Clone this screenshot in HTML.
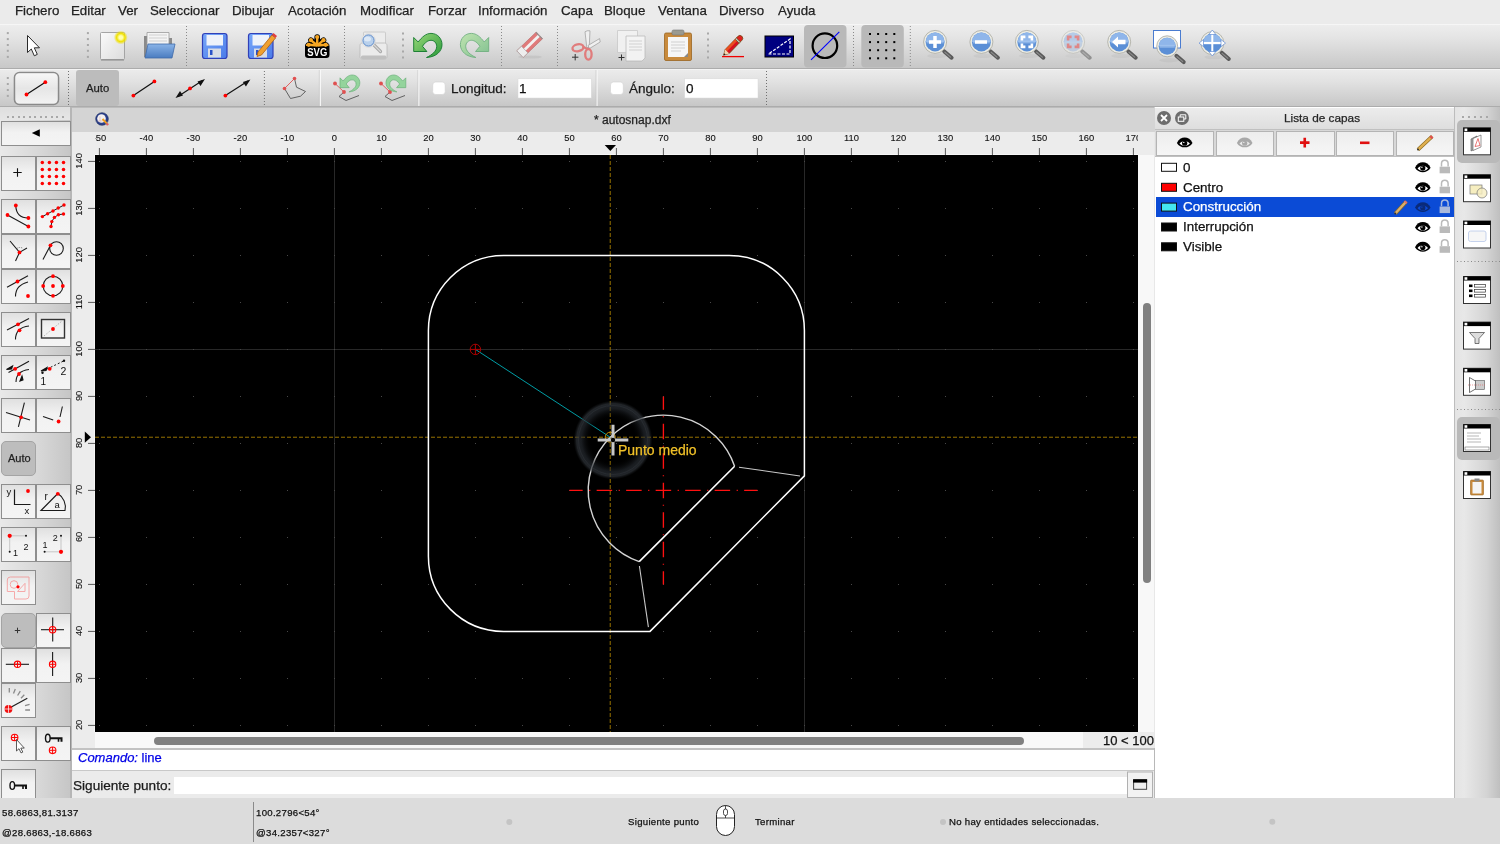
<!DOCTYPE html><html><head><meta charset="utf-8"><style>
*{margin:0;padding:0;box-sizing:border-box}
html,body{width:1500px;height:844px;overflow:hidden;background:#e8e8e8;font-family:"Liberation Sans",sans-serif;color:#1c1c1c}
.a{position:absolute}
.t{position:absolute;white-space:nowrap;line-height:1;will-change:transform;-webkit-text-stroke:0.25px currentColor}
svg{position:absolute;overflow:visible;will-change:transform}
</style></head><body>
<div class="a" style="left:0;top:0;width:1500px;height:24px;background:#ebebeb"></div>
<div class="t" style="left:14.6px;top:4px;font-size:13.3px;color:#222">Fichero</div>
<div class="t" style="left:71.4px;top:4px;font-size:13.3px;color:#222">Editar</div>
<div class="t" style="left:118.2px;top:4px;font-size:13.3px;color:#222">Ver</div>
<div class="t" style="left:150.4px;top:4px;font-size:13.3px;color:#222">Seleccionar</div>
<div class="t" style="left:232.4px;top:4px;font-size:13.3px;color:#222">Dibujar</div>
<div class="t" style="left:287.6px;top:4px;font-size:13.3px;color:#222">Acotación</div>
<div class="t" style="left:359.6px;top:4px;font-size:13.3px;color:#222">Modificar</div>
<div class="t" style="left:428px;top:4px;font-size:13.3px;color:#222">Forzar</div>
<div class="t" style="left:478px;top:4px;font-size:13.3px;color:#222">Información</div>
<div class="t" style="left:561px;top:4px;font-size:13.3px;color:#222">Capa</div>
<div class="t" style="left:604px;top:4px;font-size:13.3px;color:#222">Bloque</div>
<div class="t" style="left:658px;top:4px;font-size:13.3px;color:#222">Ventana</div>
<div class="t" style="left:719px;top:4px;font-size:13.3px;color:#222">Diverso</div>
<div class="t" style="left:778px;top:4px;font-size:13.3px;color:#222">Ayuda</div>
<div class="a" style="left:0;top:24px;width:1500px;height:1px;background:#f6f6f6"></div>
<div class="a" style="left:0;top:25px;width:1500px;height:43px;background:linear-gradient(#ededed,#e4e4e4 30%,#c8c8c8)"></div>
<div class="a" style="left:0;top:68px;width:1500px;height:1px;background:#acacac"></div>
<div class="a" style="left:0;top:69px;width:1500px;height:1px;background:#f4f4f4"></div>
<div class="a" style="left:0;top:70px;width:1500px;height:37px;background:linear-gradient(#ebebeb,#e2e2e2 30%,#c6c6c6)"></div>
<div class="a" style="left:0;top:106px;width:1500px;height:1px;background:#acacac"></div>
<svg class="a" style="left:0;top:0" width="1500" height="110" viewBox="0 0 1500 110"><rect x="6.8" y="32.1" width="2" height="2" fill="#a8a8a8"/><rect x="6.8" y="38.1" width="2" height="2" fill="#a8a8a8"/><rect x="6.8" y="44" width="2" height="2" fill="#a8a8a8"/><rect x="6.8" y="49.8" width="2" height="2" fill="#a8a8a8"/><rect x="6.8" y="55.9" width="2" height="2" fill="#a8a8a8"/><rect x="86.9" y="32.1" width="2" height="2" fill="#a8a8a8"/><rect x="86.9" y="38.1" width="2" height="2" fill="#a8a8a8"/><rect x="86.9" y="44" width="2" height="2" fill="#a8a8a8"/><rect x="86.9" y="49.8" width="2" height="2" fill="#a8a8a8"/><rect x="86.9" y="55.9" width="2" height="2" fill="#a8a8a8"/><rect x="6.8" y="77" width="2" height="2" fill="#a8a8a8"/><rect x="6.8" y="83" width="2" height="2" fill="#a8a8a8"/><rect x="6.8" y="89" width="2" height="2" fill="#a8a8a8"/><rect x="6.8" y="94.9" width="2" height="2" fill="#a8a8a8"/><path d="M27.5 35.5V52.5L31.3 49L34.3 55.8L37.3 54.4L34.3 47.8H39.5Z" fill="#fff" stroke="#2a2a2a" stroke-width="1" stroke-linejoin="round"/><defs><linearGradient id="pg" x1="0" y1="0" x2="1" y2="1"><stop offset="0" stop-color="#fafafa"/><stop offset="1" stop-color="#dcdcdc"/></linearGradient><radialGradient id="yg"><stop offset="0.25" stop-color="#ffffb0"/><stop offset="0.6" stop-color="#f0e000"/><stop offset="1" stop-color="#f0e000" stop-opacity="0"/></radialGradient><linearGradient id="bl" x1="0" y1="0" x2="1" y2="1"><stop offset="0" stop-color="#78a8fa"/><stop offset="1" stop-color="#4a7ae8"/></linearGradient><linearGradient id="fld" x1="0" y1="0" x2="0" y2="1"><stop offset="0" stop-color="#8ab4e8"/><stop offset="1" stop-color="#4a7cc0"/></linearGradient></defs><rect x="100.5" y="32.5" width="24" height="27" rx="1" fill="url(#pg)" stroke="#a4a4a4"/><line x1="101" y1="60" x2="124" y2="60" stroke="#888" stroke-width="1"/><circle cx="120.8" cy="37.5" r="7" fill="url(#yg)"/><path d="M144 36h9l2 2h17v19h-28z" fill="#8a8a8a"/><path d="M147 32.5h22v18h-22z" fill="#f4f4f4" stroke="#9a9a9a" stroke-width="0.8"/><path d="M149 35h18M149 38h18M149 41h18" stroke="#c8c8c8" stroke-width="0.8"/><path d="M148 44h27l-3 14h-27z" fill="url(#fld)" stroke="#3f6aa8" stroke-width="0.8"/><line x1="186.5" y1="26" x2="186.5" y2="67" stroke="#8a8a8a" stroke-width="1" stroke-dasharray="1 2"/><rect x="202.5" y="33.5" width="24.5" height="25" rx="2.5" fill="url(#bl)" stroke="#3040b8" stroke-width="1.2"/><rect x="206.5" y="35" width="16.5" height="10.5" fill="#eef2fa"/><rect x="208" y="48.5" width="13" height="9" fill="#d8dce6"/><rect x="210" y="50" width="2.5" height="5" fill="#2a52c8"/><rect x="248.5" y="33.5" width="24.5" height="25" rx="2.5" fill="url(#bl)" stroke="#3040b8" stroke-width="1.2"/><rect x="252.5" y="35" width="16.5" height="10.5" fill="#eef2fa"/><rect x="254" y="48.5" width="13" height="9" fill="#d8dce6"/><rect x="256" y="50" width="2.5" height="5" fill="#2a52c8"/><path d="M258 52L272 35l3.5 3L261.5 55L257 56.5Z" fill="#f0a030" stroke="#b06010" stroke-width="0.8"/><path d="M272 35l3.5 3 1.5-2-3.5-3z" fill="#e04040"/><line x1="288.5" y1="26" x2="288.5" y2="67" stroke="#8a8a8a" stroke-width="1" stroke-dasharray="1 2"/><rect x="305" y="43" width="24.5" height="15" rx="3.2" fill="#000"/><line x1="317.2" y1="45.5" x2="317.2" y2="37.0" stroke="#000" stroke-width="5.6" stroke-linecap="round"/><line x1="317.2" y1="45.5" x2="310.9" y2="40.2" stroke="#000" stroke-width="5.6" stroke-linecap="round"/><line x1="317.2" y1="45.5" x2="323.5" y2="40.2" stroke="#000" stroke-width="5.6" stroke-linecap="round"/><line x1="317.2" y1="45.5" x2="308.7" y2="44.8" stroke="#000" stroke-width="5.6" stroke-linecap="round"/><line x1="317.2" y1="45.5" x2="325.7" y2="44.8" stroke="#000" stroke-width="5.6" stroke-linecap="round"/><line x1="317.2" y1="45.5" x2="317.2" y2="37.0" stroke="#f5a623" stroke-width="2.4"/><circle cx="317.2" cy="37.0" r="2.1" fill="#f5a623"/><line x1="317.2" y1="45.5" x2="310.9" y2="40.2" stroke="#f5a623" stroke-width="2.4"/><circle cx="310.9" cy="40.2" r="2.1" fill="#f5a623"/><line x1="317.2" y1="45.5" x2="323.5" y2="40.2" stroke="#f5a623" stroke-width="2.4"/><circle cx="323.5" cy="40.2" r="2.1" fill="#f5a623"/><line x1="317.2" y1="45.5" x2="308.7" y2="44.8" stroke="#f5a623" stroke-width="2.4"/><circle cx="308.7" cy="44.8" r="2.1" fill="#f5a623"/><line x1="317.2" y1="45.5" x2="325.7" y2="44.8" stroke="#f5a623" stroke-width="2.4"/><circle cx="325.7" cy="44.8" r="2.1" fill="#f5a623"/><rect x="306" y="44.2" width="22.5" height="1.8" fill="#f5a623"/><text x="317.3" y="56.3" font-family="Liberation Sans" font-weight="bold" font-size="11" fill="#fff" text-anchor="middle" textLength="20" lengthAdjust="spacingAndGlyphs">SVG</text><line x1="344.5" y1="26" x2="344.5" y2="67" stroke="#8a8a8a" stroke-width="1" stroke-dasharray="1 2"/><rect x="363.5" y="32" width="22" height="15" rx="1" fill="#ececec" stroke="#c4c4c4" stroke-width="0.8"/><path d="M360 45.5c0-1.5 1-2.5 2.5-2.5h22c1.5 0 2.5 1 2.5 2.5v11c0 1.5-1 2.5-2.5 2.5h-22c-1.5 0-2.5-1-2.5-2.5z" fill="#ebebeb" stroke="#b8b8b8" stroke-width="0.8"/><rect x="361" y="55.5" width="25.5" height="3.5" rx="1.5" fill="#c0c0c0"/><line x1="374" y1="45" x2="380.5" y2="51.5" stroke="#a8a8a8" stroke-width="3.2" stroke-linecap="round"/><line x1="374" y1="45" x2="380.5" y2="51.5" stroke="#d8d8d8" stroke-width="1.2" stroke-linecap="round"/><circle cx="368.5" cy="40.5" r="6.8" fill="#f4f4f4" stroke="#d0d0d0" stroke-width="0.6"/><circle cx="368.5" cy="40.5" r="5.6" fill="#b8d0ec" stroke="#5a88c8" stroke-width="1"/><ellipse cx="367.5" cy="39" rx="3.5" ry="2.5" fill="#dce8f6"/><rect x="402" y="32.5" width="2" height="2" fill="#a8a8a8"/><rect x="402" y="38.5" width="2" height="2" fill="#a8a8a8"/><rect x="402" y="44.5" width="2" height="2" fill="#a8a8a8"/><rect x="402" y="50.5" width="2" height="2" fill="#a8a8a8"/><rect x="402" y="56.5" width="2" height="2" fill="#a8a8a8"/><defs><linearGradient id="ug" x1="0" y1="0" x2="1" y2="1"><stop offset="0" stop-color="#9ad87a"/><stop offset="1" stop-color="#2a9a3a"/></linearGradient><linearGradient id="rg" x1="1" y1="0" x2="0" y2="1"><stop offset="0" stop-color="#c0e4b0"/><stop offset="1" stop-color="#80c090"/></linearGradient></defs><path d="M413.7 37.5L418.2 42C422 37 426 33.4 431 33.4C437.5 33.4 442 38.5 442 44.6C442 51.5 436 57 426.5 57.5C432 55 436.7 51 436.7 46.5C436.7 42.8 434 40.3 431 40.3C428 40.3 425 42.5 422.5 46.3L426.9 51.5L413.7 51.5Z" fill="url(#ug)" stroke="#10782a" stroke-width="0.9" stroke-linejoin="round"/><path d="M413.7 37.5L418.2 42C422 37 426 33.4 431 33.4C437.5 33.4 442 38.5 442 44.6C442 51.5 436 57 426.5 57.5C432 55 436.7 51 436.7 46.5C436.7 42.8 434 40.3 431 40.3C428 40.3 425 42.5 422.5 46.3L426.9 51.5L413.7 51.5Z" transform="matrix(-1 0 0 1 902.4 0)" fill="url(#rg)" stroke="#70b080" stroke-width="0.9" stroke-linejoin="round"/><line x1="501.5" y1="26" x2="501.5" y2="67" stroke="#8a8a8a" stroke-width="1" stroke-dasharray="1 2"/><ellipse cx="530" cy="57" rx="12" ry="1.6" fill="#000" opacity="0.06"/><g transform="translate(520 54.1) rotate(-44)"><rect x="0" y="-4.6" width="27" height="9.2" fill="#e07a7a" stroke="#b87070" stroke-width="0.6"/><rect x="6" y="-1.4" width="21" height="2.8" fill="#f2f2f2"/><rect x="0" y="-4.6" width="6.5" height="9.2" fill="#eeeeee" stroke="#a0a0a0" stroke-width="0.6"/><rect x="26" y="-4.6" width="1.2" height="9.2" fill="#909090"/></g><line x1="557.5" y1="26" x2="557.5" y2="67" stroke="#8a8a8a" stroke-width="1" stroke-dasharray="1 2"/><path d="M585 31.8Q587 30.2 590 30.8L589.2 47.5L586.8 47.5Z" fill="#f0f0f0" stroke="#9a9a9a" stroke-width="0.7"/><path d="M588 45.5L599.6 38.6L600.2 42L589.5 48.5Z" fill="#f0f0f0" stroke="#9a9a9a" stroke-width="0.7"/><ellipse cx="578" cy="47.8" rx="5.6" ry="3.4" fill="none" stroke="#e07c7c" stroke-width="2.3" transform="rotate(-12 578 47.8)"/><path d="M582.5 46.5L587.5 49" stroke="#e07c7c" stroke-width="2.3"/><ellipse cx="588.4" cy="54.3" rx="3.2" ry="5.3" fill="none" stroke="#e07c7c" stroke-width="2.3"/><path d="M572 57.2h6.4M575.2 54v6.4" stroke="#333" stroke-width="1"/><g opacity="0.9"><path d="M617.5 30.5h20v22h-20z" fill="#f2f2f2" stroke="#c4c4c4" stroke-width="0.8"/><path d="M626 36h19v22l-3 3h-16z" fill="#f6f6f6" stroke="#b8b8b8" stroke-width="0.8"/><path d="M629 41h13M629 44h13M629 47h13M629 50h13" stroke="#c8c8c8" stroke-width="0.8"/></g><path d="M618.5 57.5h6M621.5 54.5v6" stroke="#333" stroke-width="1"/><rect x="664.5" y="33" width="27" height="27.5" rx="1.5" fill="#c88a3c" stroke="#9a6420" stroke-width="0.8"/><path d="M668 37h20v20h-16l-4-0z" fill="#f6f6f6"/><path d="M684 57l4-4v4z" fill="#888"/><path d="M671 42h14M671 45h14M671 48h14M671 51h10" stroke="#c8c8c8" stroke-width="0.8"/><rect x="672" y="30" width="12" height="5" rx="1.5" fill="#9a9a90" stroke="#777" stroke-width="0.6"/><rect x="707" y="32.5" width="2" height="2" fill="#a8a8a8"/><rect x="707" y="38.5" width="2" height="2" fill="#a8a8a8"/><rect x="707" y="44.5" width="2" height="2" fill="#a8a8a8"/><rect x="707" y="50.5" width="2" height="2" fill="#a8a8a8"/><rect x="707" y="56.5" width="2" height="2" fill="#a8a8a8"/><line x1="722" y1="56.6" x2="744" y2="56.6" stroke="#f00000" stroke-width="1.3"/><g transform="translate(723.6 55.2) rotate(-46)"><path d="M0 0L5.2 -2.8H19.6V2.8H5.2Z" fill="#d81020" stroke="#6a4a10" stroke-width="0.7"/><rect x="5.2" y="-2.8" width="14.4" height="2.6" fill="#e85020"/><path d="M0.3 0L5.2 -2.8V2.8Z" fill="#f2d8b0"/><path d="M0 0L1.8 -1V1Z" fill="#111"/><rect x="19.6" y="-2.8" width="1.8" height="5.6" fill="#d0d0d0" stroke="#6a4a10" stroke-width="0.7"/><path d="M21.4 -2.8H23.5A2.8 2.8 0 0 1 23.5 2.8H21.4Z" fill="#e02020" stroke="#6a4a10" stroke-width="0.7"/></g><rect x="765" y="36" width="28.5" height="21" fill="#000080" stroke="#000" stroke-width="1"/><path d="M768.5 54H790V39Z" fill="none" stroke="#fff" stroke-width="1.2" stroke-dasharray="3 1.5"/><rect x="804" y="25" width="42.5" height="42.5" rx="4" fill="#b9b9b9"/><circle cx="824.9" cy="45.7" r="12.3" fill="none" stroke="#000" stroke-width="2.2"/><line x1="811" y1="59.8" x2="839.3" y2="31.9" stroke="#0000ff" stroke-width="1.1"/><line x1="853.5" y1="26" x2="853.5" y2="67" stroke="#8a8a8a" stroke-width="1" stroke-dasharray="1 2"/><rect x="861.3" y="25" width="42.5" height="42.5" rx="4" fill="#b9b9b9"/><rect x="869.0" y="33.0" width="2" height="2" fill="#000"/><rect x="869.0" y="41.1" width="2" height="2" fill="#000"/><rect x="869.0" y="49.2" width="2" height="2" fill="#000"/><rect x="869.0" y="57.3" width="2" height="2" fill="#000"/><rect x="877.1" y="33.0" width="2" height="2" fill="#000"/><rect x="877.1" y="41.1" width="2" height="2" fill="#000"/><rect x="877.1" y="49.2" width="2" height="2" fill="#000"/><rect x="877.1" y="57.3" width="2" height="2" fill="#000"/><rect x="885.2" y="33.0" width="2" height="2" fill="#000"/><rect x="885.2" y="41.1" width="2" height="2" fill="#000"/><rect x="885.2" y="49.2" width="2" height="2" fill="#000"/><rect x="885.2" y="57.3" width="2" height="2" fill="#000"/><rect x="893.3" y="33.0" width="2" height="2" fill="#000"/><rect x="893.3" y="41.1" width="2" height="2" fill="#000"/><rect x="893.3" y="49.2" width="2" height="2" fill="#000"/><rect x="893.3" y="57.3" width="2" height="2" fill="#000"/><line x1="910.3" y1="26" x2="910.3" y2="67" stroke="#8a8a8a" stroke-width="1" stroke-dasharray="1 2"/><g><ellipse cx="937.1" cy="55.9" rx="10" ry="2.2" fill="#000" opacity="0.04"/><line x1="944.3000000000001" y1="51.4" x2="951.6" y2="57.7" stroke="#5a5a5a" stroke-width="4" stroke-linecap="round"/><line x1="944.9" y1="52.2" x2="950.6" y2="57.099999999999994" stroke="#8a8a8a" stroke-width="1.2" stroke-linecap="round"/><circle cx="935.1" cy="41.9" r="11.5" fill="#ecece4" stroke="#a8a8a0" stroke-width="0.8"/><circle cx="935.1" cy="41.9" r="9.5" fill="#5b8fd6"/><path d="M925.6 41.9A9.5 9.5 0 0 1 944.6 41.9Z" fill="#8fb6ea"/><rect x="926.6" y="40.4" width="17.0" height="3" fill="#a8c8f0" opacity="0.6"/><path d="M929 42h12M935 36v12" stroke="#fff" stroke-width="3.5"/></g><g><ellipse cx="983.4" cy="55.9" rx="10" ry="2.2" fill="#000" opacity="0.04"/><line x1="990.6" y1="51.4" x2="997.9" y2="57.7" stroke="#5a5a5a" stroke-width="4" stroke-linecap="round"/><line x1="991.1999999999999" y1="52.2" x2="996.9" y2="57.099999999999994" stroke="#8a8a8a" stroke-width="1.2" stroke-linecap="round"/><circle cx="981.4" cy="41.9" r="11.5" fill="#ecece4" stroke="#a8a8a0" stroke-width="0.8"/><circle cx="981.4" cy="41.9" r="9.5" fill="#5b8fd6"/><path d="M971.9 41.9A9.5 9.5 0 0 1 990.9 41.9Z" fill="#8fb6ea"/><rect x="972.9" y="40.4" width="17.0" height="3" fill="#a8c8f0" opacity="0.6"/><path d="M975 42h12" stroke="#fff" stroke-width="3.5"/></g><g><ellipse cx="1028.9" cy="55.9" rx="10" ry="2.2" fill="#000" opacity="0.04"/><line x1="1036.1000000000001" y1="51.4" x2="1043.4" y2="57.7" stroke="#5a5a5a" stroke-width="4" stroke-linecap="round"/><line x1="1036.7" y1="52.2" x2="1042.4" y2="57.099999999999994" stroke="#8a8a8a" stroke-width="1.2" stroke-linecap="round"/><circle cx="1026.9" cy="41.9" r="11.5" fill="#ecece4" stroke="#a8a8a0" stroke-width="0.8"/><circle cx="1026.9" cy="41.9" r="9.5" fill="#5b8fd6"/><path d="M1017.4000000000001 41.9A9.5 9.5 0 0 1 1036.4 41.9Z" fill="#8fb6ea"/><rect x="1018.4000000000001" y="40.4" width="17.0" height="3" fill="#a8c8f0" opacity="0.6"/><path d="M1021.9000000000001 40.4v-3.5h3.5M1028.4 36.9h3.5v3.5M1031.9 43.4v3.5h-3.5M1025.4 46.9h-3.5v-3.5" fill="none" stroke="#fff" stroke-width="2.6"/></g><g opacity="0.55"><ellipse cx="1075.1" cy="55.9" rx="10" ry="2.2" fill="#000" opacity="0.04"/><line x1="1082.3" y1="51.4" x2="1089.6" y2="57.7" stroke="#5a5a5a" stroke-width="4" stroke-linecap="round"/><line x1="1082.8999999999999" y1="52.2" x2="1088.6" y2="57.099999999999994" stroke="#8a8a8a" stroke-width="1.2" stroke-linecap="round"/><circle cx="1073.1" cy="41.9" r="11.5" fill="#ecece4" stroke="#a8a8a0" stroke-width="0.8"/><circle cx="1073.1" cy="41.9" r="9.5" fill="#a8c0e0"/><path d="M1063.6 41.9A9.5 9.5 0 0 1 1082.6 41.9Z" fill="#8fb6ea"/><rect x="1064.6" y="40.4" width="17.0" height="3" fill="#a8c8f0" opacity="0.6"/><path d="M1068.1 40.4v-3.5h3.5M1074.6 36.9h3.5v3.5M1078.1 43.4v3.5h-3.5M1071.6 46.9h-3.5v-3.5" fill="none" stroke="#e04040" stroke-width="2.6"/></g><g><ellipse cx="1121.2" cy="55.9" rx="10" ry="2.2" fill="#000" opacity="0.04"/><line x1="1128.4" y1="51.4" x2="1135.7" y2="57.7" stroke="#5a5a5a" stroke-width="4" stroke-linecap="round"/><line x1="1129.0" y1="52.2" x2="1134.7" y2="57.099999999999994" stroke="#8a8a8a" stroke-width="1.2" stroke-linecap="round"/><circle cx="1119.2" cy="41.9" r="11.5" fill="#ecece4" stroke="#a8a8a0" stroke-width="0.8"/><circle cx="1119.2" cy="41.9" r="9.5" fill="#5b8fd6"/><path d="M1109.7 41.9A9.5 9.5 0 0 1 1128.7 41.9Z" fill="#8fb6ea"/><rect x="1110.7" y="40.4" width="17.0" height="3" fill="#a8c8f0" opacity="0.6"/><path d="M1112 42l6-5.5v3.3h7.5v4.4h-7.5v3.3z" fill="#fff"/></g><rect x="1153.5" y="30.5" width="27" height="17.5" fill="#fff" stroke="#4a7cd0" stroke-width="1"/><g><ellipse cx="1169.2" cy="60.3" rx="10" ry="2.2" fill="#000" opacity="0.04"/><line x1="1176.4" y1="55.8" x2="1183.7" y2="62.099999999999994" stroke="#5a5a5a" stroke-width="4" stroke-linecap="round"/><line x1="1177.0" y1="56.599999999999994" x2="1182.7" y2="61.5" stroke="#8a8a8a" stroke-width="1.2" stroke-linecap="round"/><circle cx="1167.2" cy="46.3" r="10.5" fill="#ecece4" stroke="#a8a8a0" stroke-width="0.8"/><circle cx="1167.2" cy="46.3" r="8.5" fill="#5b8fd6"/><path d="M1158.7 46.3A8.5 8.5 0 0 1 1175.7 46.3Z" fill="#8fb6ea"/><rect x="1159.7" y="44.8" width="15.0" height="3" fill="#a8c8f0" opacity="0.6"/></g><g><ellipse cx="1214.3" cy="57.1" rx="10" ry="2.2" fill="#000" opacity="0.04"/><line x1="1221.5" y1="52.6" x2="1228.8" y2="58.900000000000006" stroke="#5a5a5a" stroke-width="4" stroke-linecap="round"/><line x1="1222.1" y1="53.400000000000006" x2="1227.8" y2="58.3" stroke="#8a8a8a" stroke-width="1.2" stroke-linecap="round"/><circle cx="1212.3" cy="43.1" r="11.5" fill="#ecece4" stroke="#a8a8a0" stroke-width="0.8"/><circle cx="1212.3" cy="43.1" r="9.5" fill="#5b8fd6"/><path d="M1202.8 43.1A9.5 9.5 0 0 1 1221.8 43.1Z" fill="#8fb6ea"/><rect x="1203.8" y="41.6" width="17.0" height="3" fill="#a8c8f0" opacity="0.6"/><path d="M1212.3 33v20M1202 43.1h20" stroke="#fff" stroke-width="2"/><path d="M1212.3 30l-3.5 4.5h7zM1212.3 56l-3.5-4.5h7zM1199 43.1l4.5-3.5v7zM1225.5 43.1l-4.5-3.5v7z" fill="#fff" stroke="#4a7cd0" stroke-width="0.6"/></g><rect x="14.5" y="72.5" width="44" height="32" rx="5" fill="none" stroke="#8a8a8a" stroke-width="1.6"/><defs><linearGradient id="bt" x1="0" y1="0" x2="0" y2="1"><stop offset="0" stop-color="#f6f6f6"/><stop offset="0.5" stop-color="#e6e6e6"/><stop offset="1" stop-color="#f2f2f2"/></linearGradient></defs><rect x="15.5" y="73.5" width="42" height="30" rx="4" fill="url(#bt)"/><line x1="26.5" y1="94.5" x2="45.3" y2="82.2" stroke="#111" stroke-width="1.2"/><circle cx="26.5" cy="94.5" r="1.9" fill="#f00"/><circle cx="45.3" cy="82.2" r="1.9" fill="#f00"/><line x1="68.5" y1="71" x2="68.5" y2="106" stroke="#707070" stroke-width="1" stroke-dasharray="1 2"/><rect x="76" y="70" width="43" height="36" rx="3" fill="#bcbcbc"/><line x1="133.4" y1="95.6" x2="154.4" y2="81.4" stroke="#111" stroke-width="1.2"/><circle cx="133.4" cy="95.6" r="1.9" fill="#f00"/><circle cx="154.4" cy="81.4" r="1.9" fill="#f00"/><line x1="178" y1="96.4" x2="202.5" y2="80.6" stroke="#111" stroke-width="1.2"/><path d="M175.5 98l4.5-7 3 4.5z M205 79l-4.5 7-3-4.5z" fill="#111"/><circle cx="190" cy="88.4" r="1.9" fill="#f00"/><line x1="225.4" y1="95.6" x2="248" y2="81" stroke="#111" stroke-width="1.2"/><path d="M250.4 79.4l-4.5 7-3-4.5z" fill="#111"/><circle cx="225.4" cy="95.6" r="1.9" fill="#f00"/><line x1="264.4" y1="71" x2="264.4" y2="106" stroke="#707070" stroke-width="1" stroke-dasharray="1 2"/><path d="M284.5 88.5L290.5 98.5L300.5 96.2L305.5 91.5L296.5 87.2L294.5 78.5" fill="none" stroke="#555" stroke-width="0.9"/><line x1="294.5" y1="78.5" x2="284.5" y2="88.5" stroke="#e06060" stroke-width="1"/><circle cx="294.5" cy="78.5" r="1.8" fill="#e05050"/><circle cx="284.5" cy="88.5" r="1.8" fill="#e05050"/><line x1="320.3" y1="70" x2="320.3" y2="106" stroke="#fafafa" stroke-width="1.2"/><line x1="319.3" y1="70" x2="319.3" y2="106" stroke="#c4c4c4" stroke-width="0.6"/><path d="M344 92L339 96.5L346 100.5L359 95.5" fill="none" stroke="#555" stroke-width="0.9"/><line x1="335" y1="83.5" x2="344" y2="92" stroke="#e06060" stroke-width="1"/><circle cx="335" cy="83.5" r="1.9" fill="#e05050"/><circle cx="344" cy="92" r="1.9" fill="#e05050"/><path d="M413.7 37.5L418.2 42C422 37 426 33.4 431 33.4C437.5 33.4 442 38.5 442 44.6C442 51.5 436 57 426.5 57.5C432 55 436.7 51 436.7 46.5C436.7 42.8 434 40.3 431 40.3C428 40.3 425 42.5 422.5 46.3L426.9 51.5L413.7 51.5Z" transform="matrix(0.7 0 0 0.7 50.41 51.62)" fill="#94d49c" stroke="#6ab07a" stroke-width="1"/><path d="M390 92L385 96.5L392 100.5L405 95.5" fill="none" stroke="#555" stroke-width="0.9"/><line x1="381" y1="83.5" x2="390" y2="92" stroke="#e06060" stroke-width="1"/><circle cx="381" cy="83.5" r="1.9" fill="#e05050"/><circle cx="390" cy="92" r="1.9" fill="#e05050"/><path d="M413.7 37.5L418.2 42C422 37 426 33.4 431 33.4C437.5 33.4 442 38.5 442 44.6C442 51.5 436 57 426.5 57.5C432 55 436.7 51 436.7 46.5C436.7 42.8 434 40.3 431 40.3C428 40.3 425 42.5 422.5 46.3L426.9 51.5L413.7 51.5Z" transform="matrix(-0.7 0 0 0.7 695.4 51.62)" fill="#94d49c" stroke="#6ab07a" stroke-width="1"/><line x1="418.8" y1="70" x2="418.8" y2="106" stroke="#fafafa" stroke-width="1.2"/><line x1="417.8" y1="70" x2="417.8" y2="106" stroke="#c4c4c4" stroke-width="0.6"/><line x1="597" y1="70" x2="597" y2="106" stroke="#fafafa" stroke-width="1.2"/><line x1="596" y1="70" x2="596" y2="106" stroke="#c4c4c4" stroke-width="0.6"/><rect x="432.7" y="82" width="12.5" height="12.5" rx="3" fill="#fff" stroke="#d0d0d0" stroke-width="0.6"/><rect x="610.5" y="82" width="12.8" height="12.5" rx="3" fill="#fff" stroke="#d0d0d0" stroke-width="0.6"/><rect x="518" y="78.8" width="73.3" height="19.2" fill="#fff" stroke="#d8d8d8" stroke-width="0.5"/><rect x="684.7" y="78.8" width="73.3" height="19.2" fill="#fff" stroke="#d8d8d8" stroke-width="0.5"/><line x1="766.5" y1="71" x2="766.5" y2="106" stroke="#707070" stroke-width="1" stroke-dasharray="1 2"/></svg>
<div class="t" style="left:86.3px;top:82.9px;font-size:11.3px;color:#222">Auto</div>
<div class="t" style="left:451.3px;top:81.5px;font-size:13.5px;color:#1a1a1a">Longitud:</div>
<div class="t" style="left:629.2px;top:81.5px;font-size:13.5px;color:#1a1a1a">Ángulo:</div>
<div class="t" style="left:519px;top:82px;font-size:13.5px;color:#111">1</div>
<div class="t" style="left:686px;top:82px;font-size:13.5px;color:#111">0</div>
<div class="a" style="left:0;top:107px;width:70px;height:691px;background:linear-gradient(90deg,#e9e9e9,#d6d6d6 60%,#c6c6c6)"></div><div class="a" style="left:70px;top:107px;width:2px;height:691px;background:#b6b6b6"></div><div class="a" style="left:0;top:107px;width:70px;height:13px;background:linear-gradient(#dedede,#e6e6e6)"></div><div class="a" style="left:6.6px;top:116px;width:2px;height:2px;background:#a8a8a8"></div><div class="a" style="left:12.1px;top:116px;width:2px;height:2px;background:#a8a8a8"></div><div class="a" style="left:17.6px;top:116px;width:2px;height:2px;background:#a8a8a8"></div><div class="a" style="left:23.1px;top:116px;width:2px;height:2px;background:#a8a8a8"></div><div class="a" style="left:28.6px;top:116px;width:2px;height:2px;background:#a8a8a8"></div><div class="a" style="left:34.1px;top:116px;width:2px;height:2px;background:#a8a8a8"></div><div class="a" style="left:39.6px;top:116px;width:2px;height:2px;background:#a8a8a8"></div><div class="a" style="left:45.1px;top:116px;width:2px;height:2px;background:#a8a8a8"></div><div class="a" style="left:50.6px;top:116px;width:2px;height:2px;background:#a8a8a8"></div><div class="a" style="left:56.1px;top:116px;width:2px;height:2px;background:#a8a8a8"></div><div class="a" style="left:61.6px;top:116px;width:2px;height:2px;background:#a8a8a8"></div><div class="a" style="left:1px;top:120.5px;width:70px;height:25px;background:linear-gradient(#e0e0e0,#f2f2f2 45%,#f4f4f4);border:1px solid #8e8e8e"></div><div class="a" style="left:1px;top:156px;width:35px;height:35px;background:linear-gradient(#e0e0e0,#f2f2f2 45%,#f4f4f4);border:1px solid #8e8e8e"></div><div class="a" style="left:36px;top:156px;width:35px;height:35px;background:linear-gradient(#e0e0e0,#f2f2f2 45%,#f4f4f4);border:1px solid #8e8e8e"></div><div class="a" style="left:1px;top:199px;width:35px;height:35px;background:linear-gradient(#e0e0e0,#f2f2f2 45%,#f4f4f4);border:1px solid #8e8e8e"></div><div class="a" style="left:36px;top:199px;width:35px;height:35px;background:linear-gradient(#e0e0e0,#f2f2f2 45%,#f4f4f4);border:1px solid #8e8e8e"></div><div class="a" style="left:1px;top:234px;width:35px;height:35px;background:linear-gradient(#e0e0e0,#f2f2f2 45%,#f4f4f4);border:1px solid #8e8e8e"></div><div class="a" style="left:36px;top:234px;width:35px;height:35px;background:linear-gradient(#e0e0e0,#f2f2f2 45%,#f4f4f4);border:1px solid #8e8e8e"></div><div class="a" style="left:1px;top:269px;width:35px;height:35px;background:linear-gradient(#e0e0e0,#f2f2f2 45%,#f4f4f4);border:1px solid #8e8e8e"></div><div class="a" style="left:36px;top:269px;width:35px;height:35px;background:linear-gradient(#e0e0e0,#f2f2f2 45%,#f4f4f4);border:1px solid #8e8e8e"></div><div class="a" style="left:1px;top:312px;width:35px;height:35px;background:linear-gradient(#e0e0e0,#f2f2f2 45%,#f4f4f4);border:1px solid #8e8e8e"></div><div class="a" style="left:36px;top:312px;width:35px;height:35px;background:linear-gradient(#e0e0e0,#f2f2f2 45%,#f4f4f4);border:1px solid #8e8e8e"></div><div class="a" style="left:1px;top:355px;width:35px;height:35px;background:linear-gradient(#e0e0e0,#f2f2f2 45%,#f4f4f4);border:1px solid #8e8e8e"></div><div class="a" style="left:36px;top:355px;width:35px;height:35px;background:linear-gradient(#e0e0e0,#f2f2f2 45%,#f4f4f4);border:1px solid #8e8e8e"></div><div class="a" style="left:1px;top:398px;width:35px;height:35px;background:linear-gradient(#e0e0e0,#f2f2f2 45%,#f4f4f4);border:1px solid #8e8e8e"></div><div class="a" style="left:36px;top:398px;width:35px;height:35px;background:linear-gradient(#e0e0e0,#f2f2f2 45%,#f4f4f4);border:1px solid #8e8e8e"></div><div class="a" style="left:1px;top:441px;width:35px;height:35px;background:#bdbdbd;border:1px solid #a4a4a4;border-radius:5px"></div><div class="a" style="left:1px;top:484px;width:35px;height:35px;background:linear-gradient(#e0e0e0,#f2f2f2 45%,#f4f4f4);border:1px solid #8e8e8e"></div><div class="a" style="left:36px;top:484px;width:35px;height:35px;background:linear-gradient(#e0e0e0,#f2f2f2 45%,#f4f4f4);border:1px solid #8e8e8e"></div><div class="a" style="left:1px;top:527px;width:35px;height:35px;background:linear-gradient(#e0e0e0,#f2f2f2 45%,#f4f4f4);border:1px solid #8e8e8e"></div><div class="a" style="left:36px;top:527px;width:35px;height:35px;background:linear-gradient(#e0e0e0,#f2f2f2 45%,#f4f4f4);border:1px solid #8e8e8e"></div><div class="a" style="left:1px;top:570px;width:35px;height:35px;background:linear-gradient(#e0e0e0,#f2f2f2 45%,#f4f4f4);border:1px solid #8e8e8e"></div><div class="a" style="left:1px;top:613px;width:35px;height:35px;background:#bdbdbd;border:1px solid #a4a4a4;border-radius:5px"></div><div class="a" style="left:36px;top:613px;width:35px;height:35px;background:linear-gradient(#e0e0e0,#f2f2f2 45%,#f4f4f4);border:1px solid #8e8e8e"></div><div class="a" style="left:1px;top:648px;width:35px;height:35px;background:linear-gradient(#e0e0e0,#f2f2f2 45%,#f4f4f4);border:1px solid #8e8e8e"></div><div class="a" style="left:36px;top:648px;width:35px;height:35px;background:linear-gradient(#e0e0e0,#f2f2f2 45%,#f4f4f4);border:1px solid #8e8e8e"></div><div class="a" style="left:1px;top:683px;width:35px;height:35px;background:linear-gradient(#e0e0e0,#f2f2f2 45%,#f4f4f4);border:1px solid #8e8e8e"></div><div class="a" style="left:1px;top:726px;width:35px;height:35px;background:linear-gradient(#e0e0e0,#f2f2f2 45%,#f4f4f4);border:1px solid #8e8e8e"></div><div class="a" style="left:36px;top:726px;width:35px;height:35px;background:linear-gradient(#e0e0e0,#f2f2f2 45%,#f4f4f4);border:1px solid #8e8e8e"></div><div class="a" style="left:1px;top:769px;width:35px;height:30px;background:linear-gradient(#e0e0e0,#f2f2f2 45%,#f4f4f4);border:1px solid #8e8e8e"></div><div class="t" style="left:7.5px;top:453px;font-size:11px;color:#222">Auto</div><svg class="a" style="left:0;top:0" width="72" height="844" viewBox="0 0 72 844"><path d="M31.8 133L39.8 129.3V136.8Z" fill="#000"/><path d="M13.3 172.5h8.4M17.5 168.3v8.4" stroke="#111" stroke-width="1.1"/><circle cx="42.3" cy="162.6" r="1.75" fill="#f00"/><circle cx="42.3" cy="169.53" r="1.75" fill="#f00"/><circle cx="42.3" cy="176.45999999999998" r="1.75" fill="#f00"/><circle cx="42.3" cy="183.39" r="1.75" fill="#f00"/><circle cx="49.37" cy="162.6" r="1.75" fill="#f00"/><circle cx="49.37" cy="169.53" r="1.75" fill="#f00"/><circle cx="49.37" cy="176.45999999999998" r="1.75" fill="#f00"/><circle cx="49.37" cy="183.39" r="1.75" fill="#f00"/><circle cx="56.44" cy="162.6" r="1.75" fill="#f00"/><circle cx="56.44" cy="169.53" r="1.75" fill="#f00"/><circle cx="56.44" cy="176.45999999999998" r="1.75" fill="#f00"/><circle cx="56.44" cy="183.39" r="1.75" fill="#f00"/><circle cx="63.51" cy="162.6" r="1.75" fill="#f00"/><circle cx="63.51" cy="169.53" r="1.75" fill="#f00"/><circle cx="63.51" cy="176.45999999999998" r="1.75" fill="#f00"/><circle cx="63.51" cy="183.39" r="1.75" fill="#f00"/><line x1="7.5" y1="215" x2="28.4" y2="226.5" stroke="#1a1a1a" stroke-width="1.1"/><path d="M15.8 205.5C16 214 21 218 28.4 218" fill="none" stroke="#1a1a1a" stroke-width="1.1"/><circle cx="7.5" cy="215" r="1.9" fill="#f00"/><circle cx="28.4" cy="226.5" r="1.9" fill="#f00"/><circle cx="15.8" cy="205.5" r="1.9" fill="#f00"/><circle cx="28.4" cy="218" r="1.9" fill="#f00"/><path d="M42.4 216.6L64 205M51 226.5L51.8 221.6 54.4 217.4 58.4 214.7 63.5 214" fill="none" stroke="#1a1a1a" stroke-width="1"/><circle cx="42.4" cy="216.6" r="1.7" fill="#f00"/><circle cx="47.6" cy="213.7" r="1.7" fill="#f00"/><circle cx="53" cy="211" r="1.7" fill="#f00"/><circle cx="58.2" cy="208" r="1.7" fill="#f00"/><circle cx="64" cy="205" r="1.7" fill="#f00"/><circle cx="51" cy="226.5" r="1.7" fill="#f00"/><circle cx="51.8" cy="221.6" r="1.7" fill="#f00"/><circle cx="54.4" cy="217.4" r="1.7" fill="#f00"/><circle cx="58.4" cy="214.7" r="1.7" fill="#f00"/><circle cx="63.5" cy="214" r="1.7" fill="#f00"/><path d="M10 241L19.5 252.4L27 248M19.5 252.4L15.5 261" fill="none" stroke="#1a1a1a" stroke-width="1.1"/><path d="M17 248.5a4 3 0 0 1 6 0" fill="none" stroke="#333" stroke-width="0.6" stroke-dasharray="1 1"/><circle cx="19.5" cy="252.4" r="1.9" fill="#f00"/><circle cx="56.5" cy="248.5" r="6.8" fill="none" stroke="#1a1a1a" stroke-width="1.1"/><line x1="43" y1="259.5" x2="50.5" y2="245.3" stroke="#1a1a1a" stroke-width="1.1"/><circle cx="50.5" cy="245.3" r="1.9" fill="#f00"/><line x1="7" y1="287.2" x2="28" y2="275.8" stroke="#1a1a1a" stroke-width="1.1"/><path d="M15.5 296.5C15.5 289 20 284 28 282" fill="none" stroke="#1a1a1a" stroke-width="1.1"/><circle cx="17.5" cy="281.5" r="1.9" fill="#f00"/><circle cx="28" cy="296" r="1.9" fill="#f00"/><circle cx="53" cy="286" r="9.8" fill="none" stroke="#1a1a1a" stroke-width="1.1"/><circle cx="53" cy="276.2" r="1.9" fill="#f00"/><circle cx="43.2" cy="286" r="1.9" fill="#f00"/><circle cx="62.8" cy="286" r="1.9" fill="#f00"/><circle cx="53" cy="295.8" r="1.9" fill="#f00"/><circle cx="53" cy="286" r="1.9" fill="#f00"/><line x1="7" y1="330" x2="29" y2="318.5" stroke="#1a1a1a" stroke-width="1.1"/><path d="M15.5 339.5C15.5 332 20 327 29 326" fill="none" stroke="#1a1a1a" stroke-width="1.1"/><circle cx="18" cy="324.3" r="1.9" fill="#f00"/><circle cx="19.5" cy="330.3" r="1.9" fill="#f00"/><rect x="41.5" y="319.5" width="23" height="18.5" fill="none" stroke="#333" stroke-width="1.4"/><line x1="44" y1="336" x2="62" y2="321" stroke="#888" stroke-width="0.6" stroke-dasharray="1.5 1.5"/><circle cx="53" cy="329" r="1.9" fill="#f00"/><line x1="8.5" y1="372.6" x2="29" y2="361.2" stroke="#1a1a1a" stroke-width="1.1"/><path d="M6.5 369.5l6-3.5-1 3z" fill="#111" stroke="#111" stroke-width="1.2"/><path d="M16 382C16 375 21 370.5 29 369.5" fill="none" stroke="#1a1a1a" stroke-width="1.1"/><path d="M20 381l2-5 1 4z" fill="#111" stroke="#111" stroke-width="1.1"/><circle cx="15.2" cy="368.8" r="1.9" fill="#f00"/><circle cx="19" cy="374" r="1.9" fill="#f00"/><line x1="47" y1="369" x2="64" y2="360.8" stroke="#1a1a1a" stroke-width="1" stroke-dasharray="2 2"/><path d="M41 371l6-3.5-1 3z" fill="#111" stroke="#111" stroke-width="1.2"/><circle cx="42.5" cy="372.8" r="1.2" fill="#111"/><circle cx="64" cy="360.8" r="1.2" fill="#111"/><circle cx="49.7" cy="368.8" r="1.9" fill="#f00"/><text x="40.6" y="384.5" font-family="Liberation Sans" font-size="10" fill="#111">1</text><text x="60.5" y="374.5" font-family="Liberation Sans" font-size="10.5" fill="#111">2</text><line x1="6" y1="412.5" x2="30" y2="420" stroke="#1a1a1a" stroke-width="1.1"/><line x1="24.4" y1="402.7" x2="18.4" y2="426.8" stroke="#1a1a1a" stroke-width="1.1"/><circle cx="21.1" cy="417.3" r="1.9" fill="#f00"/><line x1="43" y1="416.5" x2="53.2" y2="420" stroke="#1a1a1a" stroke-width="1.1"/><line x1="62.4" y1="406.5" x2="60" y2="417" stroke="#1a1a1a" stroke-width="1.1"/><circle cx="58.6" cy="421.5" r="1.9" fill="#f00"/><path d="M14.5 489.5V504.5H30.5" fill="none" stroke="#1a1a1a" stroke-width="1.2"/><text x="6.5" y="495" font-family="Liberation Sans" font-size="9.5" fill="#111">y</text><text x="24.5" y="513.5" font-family="Liberation Sans" font-size="9.5" fill="#111">x</text><circle cx="28" cy="491" r="1.9" fill="#f00"/><path d="M41 510.5L57.8 493.5A16 16 0 0 1 65 510.5Z" fill="none" stroke="#1a1a1a" stroke-width="1.1"/><text x="44.5" y="500" font-family="Liberation Sans" font-size="10" fill="#111">r</text><text x="54.5" y="507.5" font-family="Liberation Sans" font-size="9.5" fill="#111">a</text><circle cx="57.8" cy="493.8" r="1.9" fill="#f00"/><path d="M9.7 535.8H26M9.7 535.8V551.8" stroke="#bbb" stroke-width="0.8"/><circle cx="9.7" cy="551.8" r="1" fill="#111"/><circle cx="26" cy="535.8" r="1" fill="#111"/><circle cx="9.7" cy="535.8" r="2.1" fill="#f00"/><text x="13" y="555.5" font-family="Liberation Sans" font-size="9" fill="#111">1</text><text x="23.5" y="549.5" font-family="Liberation Sans" font-size="9" fill="#111">2</text><path d="M44.6 551.8H61M61 535.8V551.8" stroke="#bbb" stroke-width="0.8"/><circle cx="44.6" cy="551.8" r="1" fill="#111"/><circle cx="61" cy="535.8" r="1" fill="#111"/><circle cx="61" cy="551.8" r="2.1" fill="#f00"/><text x="42.5" y="548" font-family="Liberation Sans" font-size="9" fill="#111">1</text><text x="52.8" y="541" font-family="Liberation Sans" font-size="9" fill="#111">2</text><g opacity="0.3" fill="none" stroke="#f00" stroke-width="1"><path d="M7.3 591.5V580a3 3 0 0 1 3-3H29V596a3 3 0 0 1-3 3H14.5V591.5Z"/><circle cx="14" cy="584.5" r="3.8"/><path d="M17.5 591.5L25 583.3V591.5Z"/></g><circle cx="18" cy="586.8" r="1.6" fill="#f00"/><path d="M14.8 630.5h5.5M17.5 627.7v5.5" stroke="#333" stroke-width="1"/><line x1="41" y1="629.7" x2="64" y2="629.7" stroke="#1a1a1a" stroke-width="1.1"/><line x1="52.7" y1="617.5" x2="52.7" y2="641.5" stroke="#1a1a1a" stroke-width="1.1"/><circle cx="52.6" cy="629.7" r="3.2" fill="none" stroke="#f00" stroke-width="1.1"/><path d="M49.4 629.7h6.4M52.6 626.5v6.4" stroke="#f00" stroke-width="1"/><line x1="5.8" y1="664.3" x2="29" y2="664.3" stroke="#1a1a1a" stroke-width="1.1"/><circle cx="17.5" cy="664.3" r="3.2" fill="none" stroke="#f00" stroke-width="1.1"/><path d="M14.3 664.3h6.4M17.5 661.0999999999999v6.4" stroke="#f00" stroke-width="1"/><line x1="52.6" y1="652" x2="52.6" y2="676" stroke="#1a1a1a" stroke-width="1.1"/><circle cx="52.6" cy="664.3" r="3.2" fill="none" stroke="#f00" stroke-width="1.1"/><path d="M49.4 664.3h6.4M52.6 661.0999999999999v6.4" stroke="#f00" stroke-width="1"/><g stroke="#8a8a8a" stroke-width="1.3" stroke-linecap="butt"><path d="M9.3 688v4.5M15.3 689l-1.8 4.5M20.3 691.2l-2.7 4.3M24.3 694.8l-3.3 3.5M25 705.6l4.6-1.3M25.2 710h4.8"/></g><line x1="9.5" y1="708" x2="27.3" y2="698.3" stroke="#222" stroke-width="1.3"/><circle cx="8.5" cy="709" r="3.9" fill="#f01010"/><path d="M4.6 709h7.8M8.5 705.1v7.8" stroke="#fff" stroke-width="0.7"/><circle cx="14.6" cy="737.5" r="3.3" fill="none" stroke="#f00" stroke-width="1.1"/><path d="M11.3 737.5h6.6M14.6 734.2v6.6" stroke="#f00" stroke-width="1"/><path d="M16.5 739.5V751l2.5-2.3 2 4.2 1.8-0.8-2-4h3.5Z" fill="#fff" stroke="#333" stroke-width="0.8" stroke-linejoin="round"/><ellipse cx="47.8" cy="738.2" rx="2.3" ry="3.9" fill="none" stroke="#111" stroke-width="1.4"/><path d="M50.0 737.2h12.5v4.5h-2v-2.5h-1.2v2.5h-1.6v-2.5h-7.7z" fill="#111"/><circle cx="52.6" cy="750.3" r="3.3" fill="none" stroke="#f00" stroke-width="1.1"/><path d="M49.300000000000004 750.3h6.6M52.6 747.0v6.6" stroke="#f00" stroke-width="1"/><ellipse cx="12.3" cy="785.5" rx="2.3" ry="3.9" fill="none" stroke="#111" stroke-width="1.4"/><path d="M14.5 784.5h12.5v4.5h-2v-2.5h-1.2v2.5h-1.6v-2.5h-7.7z" fill="#111"/></svg>
<div class="a" style="left:72px;top:107px;width:1083px;height:25px;background:#d4d4d4"></div>
<div class="t" style="left:594px;top:114px;font-size:12px;color:#222">* autosnap.dxf</div>
<div class="a" style="left:72px;top:132px;width:1082px;height:616px;background:#ececec"></div>
<div class="a" style="left:95px;top:155px;width:1043px;height:577px;background:#000;overflow:hidden" id="cv"></div>
<div class="a" style="left:1138px;top:155px;width:16px;height:577px;background:#f8f8f8"></div>
<div class="a" style="left:95px;top:732px;width:988px;height:16px;background:#f8f8f8"></div>
<div class="a" style="left:1143px;top:303px;width:8px;height:280px;background:#808080;border-radius:4px"></div>
<div class="a" style="left:154px;top:737px;width:870px;height:8px;background:#808080;border-radius:4px"></div>
<div class="t" style="left:1103px;top:734px;font-size:13px;color:#111">10 &lt; 100</div>
<div class="a" style="left:1154.5px;top:107px;width:1px;height:641px;background:#b4b4b4"></div>
<div class="a" style="left:1152.5px;top:748px;width:3px;height:50px;background:linear-gradient(90deg,#a8a8a8,#c8c8c8)"></div>
<svg class="a" style="left:0;top:0" width="1500" height="844" viewBox="0 0 1500 844"><defs><clipPath id="cc"><rect x="95" y="155" width="1043" height="577"/></clipPath><radialGradient id="glow" cx="0.5" cy="0.5" r="0.5"><stop offset="0.55" stop-color="#000" stop-opacity="0"/><stop offset="0.8" stop-color="#262b31" stop-opacity="0.65"/><stop offset="0.92" stop-color="#30353b" stop-opacity="0.7"/><stop offset="1" stop-color="#1a1d20" stop-opacity="0"/></radialGradient></defs><g clip-path="url(#cc)"><line x1="334.5" y1="155" x2="334.5" y2="732" stroke="#282828" stroke-width="1"/><line x1="804.5" y1="155" x2="804.5" y2="732" stroke="#282828" stroke-width="1"/><line x1="95" y1="349.5" x2="1138" y2="349.5" stroke="#282828" stroke-width="1"/><path d="M99 725h1v1h-1zM99 678h1v1h-1zM99 631h1v1h-1zM99 584h1v1h-1zM99 537h1v1h-1zM99 490h1v1h-1zM99 443h1v1h-1zM99 396h1v1h-1zM99 349h1v1h-1zM99 302h1v1h-1zM99 255h1v1h-1zM99 208h1v1h-1zM99 161h1v1h-1zM146 725h1v1h-1zM146 678h1v1h-1zM146 631h1v1h-1zM146 584h1v1h-1zM146 537h1v1h-1zM146 490h1v1h-1zM146 443h1v1h-1zM146 396h1v1h-1zM146 349h1v1h-1zM146 302h1v1h-1zM146 255h1v1h-1zM146 208h1v1h-1zM146 161h1v1h-1zM193 725h1v1h-1zM193 678h1v1h-1zM193 631h1v1h-1zM193 584h1v1h-1zM193 537h1v1h-1zM193 490h1v1h-1zM193 443h1v1h-1zM193 396h1v1h-1zM193 349h1v1h-1zM193 302h1v1h-1zM193 255h1v1h-1zM193 208h1v1h-1zM193 161h1v1h-1zM240 725h1v1h-1zM240 678h1v1h-1zM240 631h1v1h-1zM240 584h1v1h-1zM240 537h1v1h-1zM240 490h1v1h-1zM240 443h1v1h-1zM240 396h1v1h-1zM240 349h1v1h-1zM240 302h1v1h-1zM240 255h1v1h-1zM240 208h1v1h-1zM240 161h1v1h-1zM287 725h1v1h-1zM287 678h1v1h-1zM287 631h1v1h-1zM287 584h1v1h-1zM287 537h1v1h-1zM287 490h1v1h-1zM287 443h1v1h-1zM287 396h1v1h-1zM287 349h1v1h-1zM287 302h1v1h-1zM287 255h1v1h-1zM287 208h1v1h-1zM287 161h1v1h-1zM334 725h1v1h-1zM334 678h1v1h-1zM334 631h1v1h-1zM334 584h1v1h-1zM334 537h1v1h-1zM334 490h1v1h-1zM334 443h1v1h-1zM334 396h1v1h-1zM334 349h1v1h-1zM334 302h1v1h-1zM334 255h1v1h-1zM334 208h1v1h-1zM334 161h1v1h-1zM381 725h1v1h-1zM381 678h1v1h-1zM381 631h1v1h-1zM381 584h1v1h-1zM381 537h1v1h-1zM381 490h1v1h-1zM381 443h1v1h-1zM381 396h1v1h-1zM381 349h1v1h-1zM381 302h1v1h-1zM381 255h1v1h-1zM381 208h1v1h-1zM381 161h1v1h-1zM428 725h1v1h-1zM428 678h1v1h-1zM428 631h1v1h-1zM428 584h1v1h-1zM428 537h1v1h-1zM428 490h1v1h-1zM428 443h1v1h-1zM428 396h1v1h-1zM428 349h1v1h-1zM428 302h1v1h-1zM428 255h1v1h-1zM428 208h1v1h-1zM428 161h1v1h-1zM475 725h1v1h-1zM475 678h1v1h-1zM475 631h1v1h-1zM475 584h1v1h-1zM475 537h1v1h-1zM475 490h1v1h-1zM475 443h1v1h-1zM475 396h1v1h-1zM475 349h1v1h-1zM475 302h1v1h-1zM475 255h1v1h-1zM475 208h1v1h-1zM475 161h1v1h-1zM522 725h1v1h-1zM522 678h1v1h-1zM522 631h1v1h-1zM522 584h1v1h-1zM522 537h1v1h-1zM522 490h1v1h-1zM522 443h1v1h-1zM522 396h1v1h-1zM522 349h1v1h-1zM522 302h1v1h-1zM522 255h1v1h-1zM522 208h1v1h-1zM522 161h1v1h-1zM569 725h1v1h-1zM569 678h1v1h-1zM569 631h1v1h-1zM569 584h1v1h-1zM569 537h1v1h-1zM569 490h1v1h-1zM569 443h1v1h-1zM569 396h1v1h-1zM569 349h1v1h-1zM569 302h1v1h-1zM569 255h1v1h-1zM569 208h1v1h-1zM569 161h1v1h-1zM616 725h1v1h-1zM616 678h1v1h-1zM616 631h1v1h-1zM616 584h1v1h-1zM616 537h1v1h-1zM616 490h1v1h-1zM616 443h1v1h-1zM616 396h1v1h-1zM616 349h1v1h-1zM616 302h1v1h-1zM616 255h1v1h-1zM616 208h1v1h-1zM616 161h1v1h-1zM663 725h1v1h-1zM663 678h1v1h-1zM663 631h1v1h-1zM663 584h1v1h-1zM663 537h1v1h-1zM663 490h1v1h-1zM663 443h1v1h-1zM663 396h1v1h-1zM663 349h1v1h-1zM663 302h1v1h-1zM663 255h1v1h-1zM663 208h1v1h-1zM663 161h1v1h-1zM710 725h1v1h-1zM710 678h1v1h-1zM710 631h1v1h-1zM710 584h1v1h-1zM710 537h1v1h-1zM710 490h1v1h-1zM710 443h1v1h-1zM710 396h1v1h-1zM710 349h1v1h-1zM710 302h1v1h-1zM710 255h1v1h-1zM710 208h1v1h-1zM710 161h1v1h-1zM757 725h1v1h-1zM757 678h1v1h-1zM757 631h1v1h-1zM757 584h1v1h-1zM757 537h1v1h-1zM757 490h1v1h-1zM757 443h1v1h-1zM757 396h1v1h-1zM757 349h1v1h-1zM757 302h1v1h-1zM757 255h1v1h-1zM757 208h1v1h-1zM757 161h1v1h-1zM804 725h1v1h-1zM804 678h1v1h-1zM804 631h1v1h-1zM804 584h1v1h-1zM804 537h1v1h-1zM804 490h1v1h-1zM804 443h1v1h-1zM804 396h1v1h-1zM804 349h1v1h-1zM804 302h1v1h-1zM804 255h1v1h-1zM804 208h1v1h-1zM804 161h1v1h-1zM851 725h1v1h-1zM851 678h1v1h-1zM851 631h1v1h-1zM851 584h1v1h-1zM851 537h1v1h-1zM851 490h1v1h-1zM851 443h1v1h-1zM851 396h1v1h-1zM851 349h1v1h-1zM851 302h1v1h-1zM851 255h1v1h-1zM851 208h1v1h-1zM851 161h1v1h-1zM898 725h1v1h-1zM898 678h1v1h-1zM898 631h1v1h-1zM898 584h1v1h-1zM898 537h1v1h-1zM898 490h1v1h-1zM898 443h1v1h-1zM898 396h1v1h-1zM898 349h1v1h-1zM898 302h1v1h-1zM898 255h1v1h-1zM898 208h1v1h-1zM898 161h1v1h-1zM945 725h1v1h-1zM945 678h1v1h-1zM945 631h1v1h-1zM945 584h1v1h-1zM945 537h1v1h-1zM945 490h1v1h-1zM945 443h1v1h-1zM945 396h1v1h-1zM945 349h1v1h-1zM945 302h1v1h-1zM945 255h1v1h-1zM945 208h1v1h-1zM945 161h1v1h-1zM992 725h1v1h-1zM992 678h1v1h-1zM992 631h1v1h-1zM992 584h1v1h-1zM992 537h1v1h-1zM992 490h1v1h-1zM992 443h1v1h-1zM992 396h1v1h-1zM992 349h1v1h-1zM992 302h1v1h-1zM992 255h1v1h-1zM992 208h1v1h-1zM992 161h1v1h-1zM1039 725h1v1h-1zM1039 678h1v1h-1zM1039 631h1v1h-1zM1039 584h1v1h-1zM1039 537h1v1h-1zM1039 490h1v1h-1zM1039 443h1v1h-1zM1039 396h1v1h-1zM1039 349h1v1h-1zM1039 302h1v1h-1zM1039 255h1v1h-1zM1039 208h1v1h-1zM1039 161h1v1h-1zM1086 725h1v1h-1zM1086 678h1v1h-1zM1086 631h1v1h-1zM1086 584h1v1h-1zM1086 537h1v1h-1zM1086 490h1v1h-1zM1086 443h1v1h-1zM1086 396h1v1h-1zM1086 349h1v1h-1zM1086 302h1v1h-1zM1086 255h1v1h-1zM1086 208h1v1h-1zM1086 161h1v1h-1zM1133 725h1v1h-1zM1133 678h1v1h-1zM1133 631h1v1h-1zM1133 584h1v1h-1zM1133 537h1v1h-1zM1133 490h1v1h-1zM1133 443h1v1h-1zM1133 396h1v1h-1zM1133 349h1v1h-1zM1133 302h1v1h-1zM1133 255h1v1h-1zM1133 208h1v1h-1zM1133 161h1v1h-1z" fill="#484848"/><line x1="95" y1="437.22561" x2="1138" y2="437.22561" stroke="#987200" stroke-width="1" stroke-dasharray="4 2"/><line x1="610.22561" y1="155" x2="610.22561" y2="732" stroke="#987200" stroke-width="1" stroke-dasharray="4 2"/><path d="M503.59999999999997 255.4H729.1999999999999A75.2 75.2 0 0 1 804.4 330.6V475.83000000000004L650.005 631.4H503.59999999999997A75.2 75.2 0 0 1 428.4 556.1999999999999V330.6A75.2 75.2 0 0 1 503.59999999999997 255.4Z" fill="none" stroke="#fff" stroke-width="1.5"/><path d="M734.605 466.195A75.2 75.2 0 1 0 639.1949999999999 561.605" fill="none" stroke="#d4d4d4" stroke-width="1.4"/><line x1="734.605" y1="466.195" x2="639.1949999999999" y2="561.605" stroke="#fff" stroke-width="1.6"/><line x1="739" y1="467.2" x2="800" y2="476" stroke="#c8c8c8" stroke-width="1.1"/><line x1="639.4" y1="566" x2="648.4" y2="627.2" stroke="#c8c8c8" stroke-width="1.1"/><line x1="569.4" y1="490.4" x2="757.4" y2="490.4" stroke="#ff1010" stroke-width="1.35" stroke-dasharray="15.5 6.5 1.2 6.3" stroke-dashoffset="2.25"/><line x1="663.4" y1="396.4" x2="663.4" y2="584.4" stroke="#ff1010" stroke-width="1.35" stroke-dasharray="15.5 6.5 1.2 6.3" stroke-dashoffset="2.25"/><line x1="475.4" y1="349.4" x2="610.22561" y2="437.22561" stroke="#009ca4" stroke-width="1"/><circle cx="475.4" cy="349.4" r="5.2" fill="none" stroke="#b00000" stroke-width="1"/><path d="M470.2 349.4h10.4M475.4 344.2v10.4" stroke="#b00000" stroke-width="1"/><circle cx="613" cy="440" r="39.5" fill="url(#glow)"/><circle cx="613" cy="440" r="34.5" fill="none" stroke="#3a4046" stroke-opacity="0.35" stroke-width="1"/><circle cx="610.22561" cy="437.22561" r="5" fill="none" stroke="#c89000" stroke-width="1"/><path d="M597.7 440h30.6M613 424.8v30.6" stroke="#c8c8c8" stroke-width="3"/><circle cx="613" cy="440" r="2.2" fill="#000"/></g></svg>
<div class="t" style="left:618.3px;top:443px;font-size:14px;color:#f0c028">Punto medio</div>
<svg class="a" style="left:0;top:0" width="1500" height="844" viewBox="0 0 1500 844"><defs><clipPath id="rc"><rect x="95" y="130" width="1043" height="25"/></clipPath></defs><line x1="72" y1="107.5" x2="1154" y2="107.5" stroke="#bcbcbc" stroke-width="1"/><rect x="95" y="154" width="1043" height="1" fill="#f6f6f6"/><rect x="94" y="155" width="1" height="577" fill="#f6f6f6"/><line x1="99.4" y1="148" x2="99.4" y2="155" stroke="#5a5a5a" stroke-width="1"/><text clip-path="url(#rc)" x="99.4" y="141" font-family="Liberation Sans" font-size="9.4" fill="#111" stroke="#111" stroke-width="0.1" text-anchor="middle">-50</text><line x1="146.4" y1="148" x2="146.4" y2="155" stroke="#5a5a5a" stroke-width="1"/><text clip-path="url(#rc)" x="146.4" y="141" font-family="Liberation Sans" font-size="9.4" fill="#111" stroke="#111" stroke-width="0.1" text-anchor="middle">-40</text><line x1="193.4" y1="148" x2="193.4" y2="155" stroke="#5a5a5a" stroke-width="1"/><text clip-path="url(#rc)" x="193.4" y="141" font-family="Liberation Sans" font-size="9.4" fill="#111" stroke="#111" stroke-width="0.1" text-anchor="middle">-30</text><line x1="240.4" y1="148" x2="240.4" y2="155" stroke="#5a5a5a" stroke-width="1"/><text clip-path="url(#rc)" x="240.4" y="141" font-family="Liberation Sans" font-size="9.4" fill="#111" stroke="#111" stroke-width="0.1" text-anchor="middle">-20</text><line x1="287.4" y1="148" x2="287.4" y2="155" stroke="#5a5a5a" stroke-width="1"/><text clip-path="url(#rc)" x="287.4" y="141" font-family="Liberation Sans" font-size="9.4" fill="#111" stroke="#111" stroke-width="0.1" text-anchor="middle">-10</text><line x1="334.4" y1="148" x2="334.4" y2="155" stroke="#5a5a5a" stroke-width="1"/><text clip-path="url(#rc)" x="334.4" y="141" font-family="Liberation Sans" font-size="9.4" fill="#111" stroke="#111" stroke-width="0.1" text-anchor="middle">0</text><line x1="381.4" y1="148" x2="381.4" y2="155" stroke="#5a5a5a" stroke-width="1"/><text clip-path="url(#rc)" x="381.4" y="141" font-family="Liberation Sans" font-size="9.4" fill="#111" stroke="#111" stroke-width="0.1" text-anchor="middle">10</text><line x1="428.4" y1="148" x2="428.4" y2="155" stroke="#5a5a5a" stroke-width="1"/><text clip-path="url(#rc)" x="428.4" y="141" font-family="Liberation Sans" font-size="9.4" fill="#111" stroke="#111" stroke-width="0.1" text-anchor="middle">20</text><line x1="475.4" y1="148" x2="475.4" y2="155" stroke="#5a5a5a" stroke-width="1"/><text clip-path="url(#rc)" x="475.4" y="141" font-family="Liberation Sans" font-size="9.4" fill="#111" stroke="#111" stroke-width="0.1" text-anchor="middle">30</text><line x1="522.4" y1="148" x2="522.4" y2="155" stroke="#5a5a5a" stroke-width="1"/><text clip-path="url(#rc)" x="522.4" y="141" font-family="Liberation Sans" font-size="9.4" fill="#111" stroke="#111" stroke-width="0.1" text-anchor="middle">40</text><line x1="569.4" y1="148" x2="569.4" y2="155" stroke="#5a5a5a" stroke-width="1"/><text clip-path="url(#rc)" x="569.4" y="141" font-family="Liberation Sans" font-size="9.4" fill="#111" stroke="#111" stroke-width="0.1" text-anchor="middle">50</text><line x1="616.4" y1="148" x2="616.4" y2="155" stroke="#5a5a5a" stroke-width="1"/><text clip-path="url(#rc)" x="616.4" y="141" font-family="Liberation Sans" font-size="9.4" fill="#111" stroke="#111" stroke-width="0.1" text-anchor="middle">60</text><line x1="663.4" y1="148" x2="663.4" y2="155" stroke="#5a5a5a" stroke-width="1"/><text clip-path="url(#rc)" x="663.4" y="141" font-family="Liberation Sans" font-size="9.4" fill="#111" stroke="#111" stroke-width="0.1" text-anchor="middle">70</text><line x1="710.4" y1="148" x2="710.4" y2="155" stroke="#5a5a5a" stroke-width="1"/><text clip-path="url(#rc)" x="710.4" y="141" font-family="Liberation Sans" font-size="9.4" fill="#111" stroke="#111" stroke-width="0.1" text-anchor="middle">80</text><line x1="757.4" y1="148" x2="757.4" y2="155" stroke="#5a5a5a" stroke-width="1"/><text clip-path="url(#rc)" x="757.4" y="141" font-family="Liberation Sans" font-size="9.4" fill="#111" stroke="#111" stroke-width="0.1" text-anchor="middle">90</text><line x1="804.4" y1="148" x2="804.4" y2="155" stroke="#5a5a5a" stroke-width="1"/><text clip-path="url(#rc)" x="804.4" y="141" font-family="Liberation Sans" font-size="9.4" fill="#111" stroke="#111" stroke-width="0.1" text-anchor="middle">100</text><line x1="851.4" y1="148" x2="851.4" y2="155" stroke="#5a5a5a" stroke-width="1"/><text clip-path="url(#rc)" x="851.4" y="141" font-family="Liberation Sans" font-size="9.4" fill="#111" stroke="#111" stroke-width="0.1" text-anchor="middle">110</text><line x1="898.4" y1="148" x2="898.4" y2="155" stroke="#5a5a5a" stroke-width="1"/><text clip-path="url(#rc)" x="898.4" y="141" font-family="Liberation Sans" font-size="9.4" fill="#111" stroke="#111" stroke-width="0.1" text-anchor="middle">120</text><line x1="945.4" y1="148" x2="945.4" y2="155" stroke="#5a5a5a" stroke-width="1"/><text clip-path="url(#rc)" x="945.4" y="141" font-family="Liberation Sans" font-size="9.4" fill="#111" stroke="#111" stroke-width="0.1" text-anchor="middle">130</text><line x1="992.4" y1="148" x2="992.4" y2="155" stroke="#5a5a5a" stroke-width="1"/><text clip-path="url(#rc)" x="992.4" y="141" font-family="Liberation Sans" font-size="9.4" fill="#111" stroke="#111" stroke-width="0.1" text-anchor="middle">140</text><line x1="1039.4" y1="148" x2="1039.4" y2="155" stroke="#5a5a5a" stroke-width="1"/><text clip-path="url(#rc)" x="1039.4" y="141" font-family="Liberation Sans" font-size="9.4" fill="#111" stroke="#111" stroke-width="0.1" text-anchor="middle">150</text><line x1="1086.4" y1="148" x2="1086.4" y2="155" stroke="#5a5a5a" stroke-width="1"/><text clip-path="url(#rc)" x="1086.4" y="141" font-family="Liberation Sans" font-size="9.4" fill="#111" stroke="#111" stroke-width="0.1" text-anchor="middle">160</text><line x1="1133.4" y1="148" x2="1133.4" y2="155" stroke="#5a5a5a" stroke-width="1"/><text clip-path="url(#rc)" x="1133.4" y="141" font-family="Liberation Sans" font-size="9.4" fill="#111" stroke="#111" stroke-width="0.1" text-anchor="middle">170</text><line x1="88" y1="725.4" x2="95" y2="725.4" stroke="#5a5a5a" stroke-width="1"/><text transform="translate(81.6 724.9) rotate(-90)" x="0" y="0" font-family="Liberation Sans" font-size="9.4" fill="#111" stroke="#111" stroke-width="0.1" text-anchor="middle">20</text><line x1="88" y1="678.4" x2="95" y2="678.4" stroke="#5a5a5a" stroke-width="1"/><text transform="translate(81.6 677.9) rotate(-90)" x="0" y="0" font-family="Liberation Sans" font-size="9.4" fill="#111" stroke="#111" stroke-width="0.1" text-anchor="middle">30</text><line x1="88" y1="631.4" x2="95" y2="631.4" stroke="#5a5a5a" stroke-width="1"/><text transform="translate(81.6 630.9) rotate(-90)" x="0" y="0" font-family="Liberation Sans" font-size="9.4" fill="#111" stroke="#111" stroke-width="0.1" text-anchor="middle">40</text><line x1="88" y1="584.4" x2="95" y2="584.4" stroke="#5a5a5a" stroke-width="1"/><text transform="translate(81.6 583.9) rotate(-90)" x="0" y="0" font-family="Liberation Sans" font-size="9.4" fill="#111" stroke="#111" stroke-width="0.1" text-anchor="middle">50</text><line x1="88" y1="537.4" x2="95" y2="537.4" stroke="#5a5a5a" stroke-width="1"/><text transform="translate(81.6 536.9) rotate(-90)" x="0" y="0" font-family="Liberation Sans" font-size="9.4" fill="#111" stroke="#111" stroke-width="0.1" text-anchor="middle">60</text><line x1="88" y1="490.4" x2="95" y2="490.4" stroke="#5a5a5a" stroke-width="1"/><text transform="translate(81.6 489.9) rotate(-90)" x="0" y="0" font-family="Liberation Sans" font-size="9.4" fill="#111" stroke="#111" stroke-width="0.1" text-anchor="middle">70</text><line x1="88" y1="443.4" x2="95" y2="443.4" stroke="#5a5a5a" stroke-width="1"/><text transform="translate(81.6 442.9) rotate(-90)" x="0" y="0" font-family="Liberation Sans" font-size="9.4" fill="#111" stroke="#111" stroke-width="0.1" text-anchor="middle">80</text><line x1="88" y1="396.4" x2="95" y2="396.4" stroke="#5a5a5a" stroke-width="1"/><text transform="translate(81.6 395.9) rotate(-90)" x="0" y="0" font-family="Liberation Sans" font-size="9.4" fill="#111" stroke="#111" stroke-width="0.1" text-anchor="middle">90</text><line x1="88" y1="349.4" x2="95" y2="349.4" stroke="#5a5a5a" stroke-width="1"/><text transform="translate(81.6 348.9) rotate(-90)" x="0" y="0" font-family="Liberation Sans" font-size="9.4" fill="#111" stroke="#111" stroke-width="0.1" text-anchor="middle">100</text><line x1="88" y1="302.4" x2="95" y2="302.4" stroke="#5a5a5a" stroke-width="1"/><text transform="translate(81.6 301.9) rotate(-90)" x="0" y="0" font-family="Liberation Sans" font-size="9.4" fill="#111" stroke="#111" stroke-width="0.1" text-anchor="middle">110</text><line x1="88" y1="255.4" x2="95" y2="255.4" stroke="#5a5a5a" stroke-width="1"/><text transform="translate(81.6 254.9) rotate(-90)" x="0" y="0" font-family="Liberation Sans" font-size="9.4" fill="#111" stroke="#111" stroke-width="0.1" text-anchor="middle">120</text><line x1="88" y1="208.4" x2="95" y2="208.4" stroke="#5a5a5a" stroke-width="1"/><text transform="translate(81.6 207.9) rotate(-90)" x="0" y="0" font-family="Liberation Sans" font-size="9.4" fill="#111" stroke="#111" stroke-width="0.1" text-anchor="middle">130</text><line x1="88" y1="161.4" x2="95" y2="161.4" stroke="#5a5a5a" stroke-width="1"/><text transform="translate(81.6 160.9) rotate(-90)" x="0" y="0" font-family="Liberation Sans" font-size="9.4" fill="#111" stroke="#111" stroke-width="0.1" text-anchor="middle">140</text><path d="M604.7 145H616L610.3 151Z" fill="#000"/><path d="M84.8 431.6V442.8L91 437.2Z" fill="#000"/><circle cx="102" cy="119" r="6.3" fill="#2a3f8a" stroke="#1a2a60" stroke-width="0.6"/><circle cx="101.5" cy="118.5" r="4.3" fill="#f4f0f0"/><path d="M97.5 121h5M100 116.5v5" stroke="#c8a0a0" stroke-width="0.5"/><path d="M102.5 119l4.2 4.4" stroke="#f0a020" stroke-width="2"/><circle cx="107.3" cy="124.2" r="1.2" fill="#e06060"/></svg>
<div class="a" style="left:72px;top:748px;width:1082px;height:2px;background:#c2c2c2"></div>
<div class="a" style="left:72px;top:750px;width:1082px;height:20px;background:#fff"></div>
<div class="a" style="left:72px;top:770px;width:1082px;height:1px;background:#c8c8c8"></div>
<div class="a" style="left:72px;top:771px;width:1082px;height:27px;background:#ebebeb"></div>
<div class="t" style="left:77.5px;top:751px;font-size:13px;color:#0000e6"><i>Comando:</i> line</div>
<div class="t" style="left:73.3px;top:779px;font-size:13.6px;color:#1a1a1a">Siguiente punto:</div>
<div class="a" style="left:174px;top:776.5px;width:953px;height:17.5px;background:#fff"></div>
<div class="a" style="left:1155px;top:107px;width:299px;height:691px;background:#fff"></div><div class="a" style="left:1155px;top:108px;width:299px;height:21px;background:linear-gradient(#ececec,#dedede)"></div><div class="a" style="left:1155px;top:129px;width:299px;height:1px;background:#c0c0c0"></div><div class="a" style="left:1155px;top:130px;width:299px;height:27px;background:#d8d8d8"></div><div class="a" style="left:1155.5px;top:130.5px;width:58.7px;height:25px;background:linear-gradient(#ededed,#f6f6f6);border:1px solid #b4b4b4"></div><div class="a" style="left:1215.8px;top:130.5px;width:58.3px;height:25px;background:linear-gradient(#ededed,#f6f6f6);border:1px solid #b4b4b4"></div><div class="a" style="left:1275.5px;top:130.5px;width:59.3px;height:25px;background:linear-gradient(#ededed,#f6f6f6);border:1px solid #b4b4b4"></div><div class="a" style="left:1336px;top:130.5px;width:58.3px;height:25px;background:linear-gradient(#ededed,#f6f6f6);border:1px solid #b4b4b4"></div><div class="a" style="left:1395.5px;top:130.5px;width:58.5px;height:25px;background:linear-gradient(#ededed,#f6f6f6);border:1px solid #b4b4b4"></div><div class="a" style="left:1155px;top:155.5px;width:299px;height:1.5px;background:#c0c0c0"></div><div class="a" style="left:1454px;top:107px;width:1px;height:691px;background:#bdbdbd"></div><div class="t" style="left:1284.2px;top:113px;font-size:11.8px;color:#262626">Lista de capas</div><div class="a" style="left:1156px;top:197px;width:298px;height:19.7px;background:#0b4bd6"></div><div class="t" style="left:1183px;top:160.5px;font-size:13.4px;color:#111">0</div><div class="t" style="left:1183px;top:180.5px;font-size:13.4px;color:#111">Centro</div><div class="t" style="left:1183px;top:200.3px;font-size:13.4px;color:#fff">Construcción</div><div class="t" style="left:1183px;top:220.2px;font-size:13.4px;color:#111">Interrupción</div><div class="t" style="left:1183px;top:240.0px;font-size:13.4px;color:#111">Visible</div><div class="a" style="left:1455px;top:107px;width:45px;height:691px;background:linear-gradient(90deg,#e4e4e4,#e8e8e8 20%,#d4d4d4 70%,#bfbfbf)"></div><div class="a" style="left:1461.5px;top:116px;width:2px;height:2px;background:#a8a8a8"></div><div class="a" style="left:1467.5px;top:116px;width:2px;height:2px;background:#a8a8a8"></div><div class="a" style="left:1473.5px;top:116px;width:2px;height:2px;background:#a8a8a8"></div><div class="a" style="left:1479.5px;top:116px;width:2px;height:2px;background:#a8a8a8"></div><div class="a" style="left:1485.5px;top:116px;width:2px;height:2px;background:#a8a8a8"></div><div class="a" style="left:1456.5px;top:120px;width:43px;height:43px;background:#b9b9b9;border-radius:5px"></div><div class="a" style="left:1456.5px;top:417px;width:43px;height:43px;background:#b9b9b9;border-radius:5px"></div><svg class="a" style="left:0;top:0" width="1500" height="844" viewBox="0 0 1500 844"><circle cx="1164" cy="118" r="7" fill="#6d6d6d"/><path d="M1161 115l6 6M1167 115l-6 6" stroke="#fff" stroke-width="1.8"/><circle cx="1182" cy="118" r="7" fill="#6d6d6d"/><rect x="1178.3" y="117" width="5.5" height="4.3" fill="none" stroke="#fff" stroke-width="1"/><path d="M1180.2 116.8V114.8H1185.8V119H1183.9" fill="none" stroke="#fff" stroke-width="1"/><path d="M1176.9 142.9C1180.2 135.6 1189.2 135.6 1192.5 142.9C1189.2 148.79999999999998 1180.2 148.79999999999998 1176.9 142.9Z" fill="#000"/><path d="M1179.5 143.6C1182.2 140.0 1187.2 140.0 1189.9 143.6C1187.2 146.79999999999998 1182.2 146.79999999999998 1179.5 143.6Z" fill="#fff"/><circle cx="1184.7" cy="143.2" r="2.6" fill="#000"/><circle cx="1183.8" cy="142.4" r="0.7" fill="#fff"/><path d="M1236.9 142.9C1240.2 135.6 1249.2 135.6 1252.5 142.9C1249.2 148.79999999999998 1240.2 148.79999999999998 1236.9 142.9Z" fill="#a8a8a8"/><path d="M1239.5 143.6C1242.2 140.0 1247.2 140.0 1249.9 143.6C1247.2 146.79999999999998 1242.2 146.79999999999998 1239.5 143.6Z" fill="#eaeaea"/><circle cx="1244.7" cy="143.2" r="2.6" fill="#a8a8a8"/><circle cx="1243.8" cy="142.4" r="0.7" fill="#eaeaea"/><path d="M1300 142.6h9.5M1304.75 137.8v9.6" stroke="#e01010" stroke-width="2.6"/><path d="M1360 142.8h9.5" stroke="#e01010" stroke-width="2.6"/><line x1="1418" y1="149.6" x2="1432.2" y2="136.4" stroke="#8a6a20" stroke-width="3.6" stroke-linecap="butt"/><line x1="1418" y1="149.6" x2="1432.2" y2="136.4" stroke="#e0b050" stroke-width="2.4"/><line x1="1430.496" y1="137.984" x2="1432.2" y2="136.4" stroke="#e05050" stroke-width="3.2"/><circle cx="1418" cy="149.6" r="1" fill="#333"/><rect x="1161.5" y="163.3" width="15" height="8" fill="#ffffff" stroke="#111" stroke-width="1"/><path d="M1415.0 167.8C1418.3 160.5 1427.3 160.5 1430.6 167.8C1427.3 173.7 1418.3 173.7 1415.0 167.8Z" fill="#000"/><path d="M1417.6 168.5C1420.3 164.9 1425.3 164.9 1428.0 168.5C1425.3 171.7 1420.3 171.7 1417.6 168.5Z" fill="#fff"/><circle cx="1422.8" cy="168.1" r="2.6" fill="#000"/><circle cx="1421.8999999999999" cy="167.3" r="0.7" fill="#fff"/><path d="M1441.5 166.5V163.5A3.3 3.3 0 0 1 1448.1 163.5V166.5" fill="none" stroke="#bababa" stroke-width="1.5"/><rect x="1439.6" y="166.7" width="10.4" height="6.6" fill="#bababa"/><rect x="1161.5" y="183.3" width="15" height="8" fill="#ff0000" stroke="#111" stroke-width="1"/><path d="M1415.0 187.8C1418.3 180.5 1427.3 180.5 1430.6 187.8C1427.3 193.7 1418.3 193.7 1415.0 187.8Z" fill="#000"/><path d="M1417.6 188.5C1420.3 184.9 1425.3 184.9 1428.0 188.5C1425.3 191.7 1420.3 191.7 1417.6 188.5Z" fill="#fff"/><circle cx="1422.8" cy="188.1" r="2.6" fill="#000"/><circle cx="1421.8999999999999" cy="187.3" r="0.7" fill="#fff"/><path d="M1441.5 186.5V183.5A3.3 3.3 0 0 1 1448.1 183.5V186.5" fill="none" stroke="#bababa" stroke-width="1.5"/><rect x="1439.6" y="186.7" width="10.4" height="6.6" fill="#bababa"/><rect x="1161.5" y="203.1" width="15" height="8" fill="#44e6f0" stroke="#111" stroke-width="1"/><path d="M1415.0 207.60000000000002C1418.3 200.3 1427.3 200.3 1430.6 207.60000000000002C1427.3 213.5 1418.3 213.5 1415.0 207.60000000000002Z" fill="#0a2a78"/><path d="M1417.6 208.3C1420.3 204.70000000000002 1425.3 204.70000000000002 1428.0 208.3C1425.3 211.5 1420.3 211.5 1417.6 208.3Z" fill="#0b4bd6"/><circle cx="1422.8" cy="207.9" r="2.6" fill="#0a2a78"/><circle cx="1421.8999999999999" cy="207.10000000000002" r="0.7" fill="#0b4bd6"/><path d="M1441.5 206.3V203.3A3.3 3.3 0 0 1 1448.1 203.3V206.3" fill="none" stroke="#a9b9dc" stroke-width="1.5"/><rect x="1439.6" y="206.5" width="10.4" height="6.6" fill="#a9b9dc"/><line x1="1395.3" y1="213.5" x2="1406.3" y2="201.5" stroke="#8a6a20" stroke-width="3.6" stroke-linecap="butt"/><line x1="1395.3" y1="213.5" x2="1406.3" y2="201.5" stroke="#d8b070" stroke-width="2.4"/><line x1="1404.98" y1="202.94" x2="1406.3" y2="201.5" stroke="#e07070" stroke-width="3.2"/><circle cx="1395.3" cy="213.5" r="1" fill="#333"/><rect x="1161.5" y="223.0" width="15" height="8" fill="#000000" stroke="#111" stroke-width="1"/><path d="M1415.0 227.5C1418.3 220.2 1427.3 220.2 1430.6 227.5C1427.3 233.39999999999998 1418.3 233.39999999999998 1415.0 227.5Z" fill="#000"/><path d="M1417.6 228.2C1420.3 224.6 1425.3 224.6 1428.0 228.2C1425.3 231.39999999999998 1420.3 231.39999999999998 1417.6 228.2Z" fill="#fff"/><circle cx="1422.8" cy="227.79999999999998" r="2.6" fill="#000"/><circle cx="1421.8999999999999" cy="227.0" r="0.7" fill="#fff"/><path d="M1441.5 226.2V223.2A3.3 3.3 0 0 1 1448.1 223.2V226.2" fill="none" stroke="#bababa" stroke-width="1.5"/><rect x="1439.6" y="226.39999999999998" width="10.4" height="6.6" fill="#bababa"/><rect x="1161.5" y="242.8" width="15" height="8" fill="#000000" stroke="#111" stroke-width="1"/><path d="M1415.0 247.3C1418.3 240 1427.3 240 1430.6 247.3C1427.3 253.2 1418.3 253.2 1415.0 247.3Z" fill="#000"/><path d="M1417.6 248C1420.3 244.4 1425.3 244.4 1428.0 248C1425.3 251.2 1420.3 251.2 1417.6 248Z" fill="#fff"/><circle cx="1422.8" cy="247.6" r="2.6" fill="#000"/><circle cx="1421.8999999999999" cy="246.8" r="0.7" fill="#fff"/><path d="M1441.5 246V243A3.3 3.3 0 0 1 1448.1 243V246" fill="none" stroke="#bababa" stroke-width="1.5"/><rect x="1439.6" y="246.2" width="10.4" height="6.6" fill="#bababa"/><line x1="1457" y1="261.5" x2="1500" y2="261.5" stroke="#888" stroke-width="1" stroke-dasharray="1 2.5"/><line x1="1457" y1="409.5" x2="1500" y2="409.5" stroke="#888" stroke-width="1" stroke-dasharray="1 2.5"/><rect x="1463.5" y="127.8" width="27" height="27" fill="#fff" stroke="#333" stroke-width="1"/><rect x="1463.5" y="127.8" width="27" height="4" fill="#000"/><rect x="1464.5" y="128.5" width="2.8" height="2.6" fill="#fff"/><path d="M1471 139l6-3v12l-6 3z" fill="#aaa" stroke="#555" stroke-width="0.6"/><path d="M1473 138.5l8-3.5v12l-8 3.5z" fill="#fff" stroke="#555" stroke-width="0.6"/><path d="M1475 146.5l3-8 2 7z" fill="none" stroke="#e04040" stroke-width="0.7"/><rect x="1463.5" y="174.7" width="27" height="27" fill="#fff" stroke="#333" stroke-width="1"/><rect x="1463.5" y="174.7" width="27" height="4" fill="#000"/><rect x="1464.5" y="175.39999999999998" width="2.8" height="2.6" fill="#fff"/><rect x="1470" y="185" width="12" height="9" fill="#f6eec0" stroke="#777" stroke-width="0.7"/><circle cx="1482" cy="193" r="5" fill="#f6eec0" fill-opacity="0.8" stroke="#777" stroke-width="0.7"/><rect x="1463.5" y="221.0" width="27" height="27" fill="#fff" stroke="#333" stroke-width="1"/><rect x="1463.5" y="221.0" width="27" height="4" fill="#000"/><rect x="1464.5" y="221.7" width="2.8" height="2.6" fill="#fff"/><rect x="1468.5" y="231" width="17.5" height="10.5" rx="2" fill="#f6f6f6" stroke="#b8c8e8" stroke-width="0.8"/><rect x="1463.5" y="276.5" width="27" height="27" fill="#fff" stroke="#333" stroke-width="1"/><rect x="1463.5" y="276.5" width="27" height="4" fill="#000"/><rect x="1464.5" y="277.2" width="2.8" height="2.6" fill="#fff"/><rect x="1469" y="284.5" width="3.5" height="2.6" fill="#000"/><rect x="1474.5" y="284.5" width="11" height="2.6" fill="none" stroke="#333" stroke-width="0.7"/><rect x="1469" y="289.5" width="3.5" height="2.6" fill="#000"/><rect x="1474.5" y="289.5" width="11" height="2.6" fill="none" stroke="#333" stroke-width="0.7"/><rect x="1469" y="294.5" width="3.5" height="2.6" fill="#000"/><rect x="1474.5" y="294.5" width="11" height="2.6" fill="none" stroke="#333" stroke-width="0.7"/><rect x="1463.5" y="322.1" width="27" height="27" fill="#fff" stroke="#333" stroke-width="1"/><rect x="1463.5" y="322.1" width="27" height="4" fill="#000"/><rect x="1464.5" y="322.8" width="2.8" height="2.6" fill="#fff"/><path d="M1469.5 332.5h15l-5.5 6v5h-4v-5z" fill="#ddd" stroke="#444" stroke-width="0.7"/><rect x="1463.5" y="368.3" width="27" height="27" fill="#fff" stroke="#333" stroke-width="1"/><rect x="1463.5" y="368.3" width="27" height="4" fill="#000"/><rect x="1464.5" y="369.0" width="2.8" height="2.6" fill="#fff"/><path d="M1469.5 377.5l6 3.5v8l-6 3.5z" fill="#fff" stroke="#333" stroke-width="0.7"/><rect x="1475.5" y="380.5" width="9" height="9" fill="#ccc" stroke="#555" stroke-width="0.6"/><path d="M1468 385h17" stroke="#e06060" stroke-width="0.6" stroke-dasharray="1 1"/><rect x="1463.5" y="424.5" width="27" height="27" fill="#fff" stroke="#333" stroke-width="1"/><rect x="1463.5" y="424.5" width="27" height="4" fill="#000"/><rect x="1464.5" y="425.2" width="2.8" height="2.6" fill="#fff"/><path d="M1467 433h14M1467 436h12M1467 439h14M1467 442h14" stroke="#888" stroke-width="0.6"/><rect x="1465" y="447" width="24" height="3" fill="none" stroke="#555" stroke-width="0.5"/><rect x="1463.5" y="471.5" width="27" height="27" fill="#fff" stroke="#333" stroke-width="1"/><rect x="1463.5" y="471.5" width="27" height="4" fill="#000"/><rect x="1464.5" y="472.2" width="2.8" height="2.6" fill="#fff"/><rect x="1470.5" y="480" width="13" height="15" rx="1" fill="#c88a3c" stroke="#9a6420" stroke-width="0.6"/><rect x="1472.5" y="482" width="9" height="11.5" fill="#f4f4f4"/><rect x="1474.5" y="478.5" width="5" height="3" fill="#888"/></svg>
<div class="a" style="left:0;top:798px;width:1500px;height:46px;background:#dcdcdc"></div>
<div class="t" style="left:2.4px;top:807.6px;font-size:9.6px;color:#111;letter-spacing:0.3px">58.6863,81.3137</div>
<div class="t" style="left:2.4px;top:827.5px;font-size:9.6px;color:#111;letter-spacing:0.3px">@28.6863,-18.6863</div>
<div class="a" style="left:253.3px;top:802px;width:1px;height:40px;background:#8a8a8a"></div>
<div class="t" style="left:255.6px;top:807.6px;font-size:9.6px;color:#111;letter-spacing:0.3px">100.2796&lt;54°</div>
<div class="t" style="left:255.6px;top:827.5px;font-size:9.6px;color:#111;letter-spacing:0.3px">@34.2357&lt;327°</div>
<div class="t" style="left:627.7px;top:817.3px;font-size:9.6px;color:#111;letter-spacing:0.3px">Siguiente punto</div>
<div class="t" style="left:754.7px;top:817.3px;font-size:9.6px;color:#111;letter-spacing:0.3px">Terminar</div>
<div class="t" style="left:949px;top:817.3px;font-size:9.6px;color:#111;letter-spacing:0.3px">No hay entidades seleccionadas.</div>
<svg class="a" style="left:0;top:0" width="1500" height="844" viewBox="0 0 1500 844"><circle cx="509.3" cy="822" r="3" fill="#c4c4c4"/><circle cx="943" cy="822" r="3" fill="#c4c4c4"/><circle cx="1272.3" cy="821.7" r="3" fill="#c4c4c4"/><rect x="716.5" y="805.5" width="18" height="30" rx="9" fill="#fff" stroke="#222" stroke-width="1"/><path d="M716.5 818h18M725.5 805.5v12.5" stroke="#222" stroke-width="0.8"/><rect x="723.5" y="809" width="4" height="6.5" rx="2" fill="#fff" stroke="#222" stroke-width="0.8"/><rect x="1127.5" y="772" width="25" height="25.5" fill="#f2f2f2" stroke="#b0b0b0" stroke-width="1"/><rect x="1133.6" y="779.8" width="13" height="9.5" fill="#f0f0f0" stroke="#444" stroke-width="1"/><rect x="1133.1" y="779.3" width="14" height="3.3" fill="#000"/></svg>
</body></html>
